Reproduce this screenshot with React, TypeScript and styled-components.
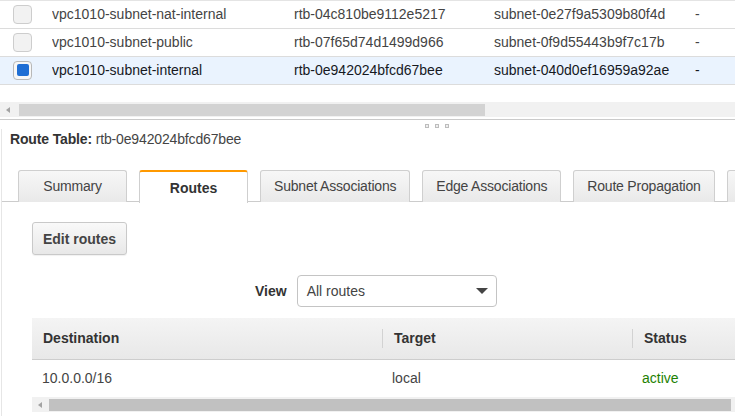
import React from "react";
import styled, { createGlobalStyle, css } from "styled-components";

const Global = createGlobalStyle`
  html, body { margin: 0; padding: 0; background: #fff; overflow: hidden; }
  body { font-family: "Liberation Sans", Arial, sans-serif; font-size: 14px; color: #444; }
  * { box-sizing: border-box; }
`;

const Page = styled.div`
  width: 735px;
  height: 416px;
  overflow: hidden;
`;

const TopTable = styled.div`
  border-top: 1px solid #e4e4e4;
`;

const Row = styled.div<{ $selected?: boolean }>`
  display: grid;
  grid-template-columns: 52px 242px 200px 201px 1fr;
  align-items: center;
  height: 28px;
  padding-bottom: 1px;
  border-bottom: 1px solid #dcdcdc;
  background: ${(p) => (p.$selected ? "#eaf3fe" : "#fff")};
  color: ${(p) => (p.$selected ? "#16191f" : "#444")};
  white-space: nowrap;
`;

const CheckCell = styled.div`
  padding-left: 13px;
  display: flex;
  align-items: center;
`;

const Check = styled.span<{ $checked?: boolean }>`
  width: 19px;
  height: 19px;
  border-radius: 4px;
  border: 1px solid ${(p) => (p.$checked ? "#b8b8b8" : "#cdcdcd")};
  background: ${(p) => (p.$checked ? "#f7f7f7" : "#f2f2f2")};
  display: flex;
  align-items: center;
  justify-content: center;
  ${(p) =>
    p.$checked &&
    css`
      &::after {
        content: "";
        width: 12px;
        height: 12px;
        border-radius: 2px;
        background: #1f6ed4;
      }
    `}
`;

const Cell = styled.div`
  overflow: hidden;
`;

const HScroll = styled.div`
  position: relative;
  height: 15px;
  background: #f1f1f1;
  display: flex;
  align-items: center;
  &::before {
    content: "";
    margin-left: 6px;
    border-style: solid;
    border-width: 3.5px 4px 3.5px 0;
    border-color: transparent #a3a3a3 transparent transparent;
  }
`;

const Thumb = styled.div<{ $color: string }>`
  position: absolute;
  top: 2px;
  bottom: 1px;
  background: ${(p) => p.$color};
`;

const TopScrollWrap = styled.div`
  margin-top: 17px;
`;

const Splitter = styled.div`
  margin-top: 2px;
  border-top: 1px solid #cacaca;
  height: 10px;
  display: flex;
  gap: 6px;
  padding-left: 425px;
  padding-top: 4px;
`;

const Grip = styled.span`
  width: 4px;
  height: 4px;
  border: 1px solid #bdbdbd;
  background: #efefef;
`;

const Panel = styled.div`
  border-left: 1px solid #e6e6e6;
  margin-left: 1px;
  height: 287px;
`;

const PanelTitle = styled.div`
  height: 20px;
  line-height: 20px;
  padding-left: 8px;
  font-size: 14px;
  color: #444;
  letter-spacing: -0.15px;
  b { color: #333; }
`;

const Tabs = styled.div`
  margin-top: 21px;
  display: flex;
  gap: 12px;
  padding-left: 16px;
  border-bottom: 1px solid #cccccc;
  height: 32px;
  white-space: nowrap;
`;

const Tab = styled.div<{ $active?: boolean }>`
  flex: none;
  height: 32px;
  min-width: 109px;
  padding: 0 13px 1px;
  display: flex;
  align-items: center;
  justify-content: center;
  border: 1px solid #cfcfcf;
  border-bottom: none;
  border-radius: 3px 3px 0 0;
  font-size: 14px;
  letter-spacing: -0.2px;
  color: #444;
  background: linear-gradient(#f7f7f7, #e9e9e9);
  ${(p) =>
    p.$active &&
    css`
      height: 33px;
      margin-bottom: -1px;
      background: #fff;
      border-top: 2px solid #f90;
      font-weight: bold;
      color: #333;
      padding-top: 1px;
      letter-spacing: 0;
    `}
`;

const TabBody = styled.div`
  padding-left: 30px;
`;

const EditButton = styled.button`
  margin-top: 20px;
  height: 33px;
  width: 95px;
  border: 1px solid #c9c9c9;
  border-radius: 3px;
  background: linear-gradient(#f9f9f9, #e8e8e8);
  font-family: "Liberation Sans", Arial, sans-serif;
  font-size: 14px;
  font-weight: bold;
  color: #444;
  padding: 0;
  box-shadow: 0 1px 1px rgba(0, 0, 0, 0.06);
`;

const ViewBar = styled.div`
  margin-top: 20px;
  display: flex;
  align-items: center;
  gap: 10px;
  padding-left: 223px;
`;

const ViewLabel = styled.span`
  font-weight: bold;
  color: #333;
`;

const Select = styled.div`
  width: 200px;
  height: 32px;
  border: 1px solid #c4c4c4;
  border-radius: 4px;
  display: flex;
  align-items: center;
  justify-content: space-between;
  padding: 0 8px 0 9px;
  color: #444;
  &::after {
    content: "";
    border-style: solid;
    border-width: 6px 6px 0 6px;
    border-color: #444 transparent transparent transparent;
  }
`;

const RoutesTable = styled.div`
  margin-top: 11px;
`;

const RGrid = styled.div`
  display: grid;
  grid-template-columns: 350px 250px 1fr;
`;

const HeadRow = styled(RGrid)`
  height: 42px;
  background: linear-gradient(#f4f4f4, #e8e8e8);
  border-bottom: 1px solid #cdcdcd;
  align-items: center;
`;

const HeadCell = styled.div<{ $sep?: boolean }>`
  font-weight: bold;
  color: #333;
  padding-left: 11px;
  height: 19px;
  line-height: 19px;
  border-left: ${(p) => (p.$sep ? "1px solid #d2d2d2" : "none")};
`;

const DataRow = styled(RGrid)`
  height: 36px;
  align-items: center;
`;

const DataCell = styled.div<{ $status?: boolean }>`
  padding-left: 10px;
  color: ${(p) => (p.$status ? "#1d8102" : "#444")};
`;

const BottomScrollWrap = styled.div`
  margin-top: 1px;
`;

const topRows = [
  { name: "vpc1010-subnet-nat-internal", rtb: "rtb-04c810be9112e5217", subnet: "subnet-0e27f9a5309b80f4d" },
  { name: "vpc1010-subnet-public", rtb: "rtb-07f65d74d1499d966", subnet: "subnet-0f9d55443b9f7c17b" },
  { name: "vpc1010-subnet-internal", rtb: "rtb-0e942024bfcd67bee", subnet: "subnet-040d0ef16959a92ae", selected: true },
];

const tabs = ["Summary", "Routes", "Subnet Associations", "Edge Associations", "Route Propagation", ""];

export default function App() {
  return (
    <Page>
      <Global />
      <TopTable>
        {topRows.map((r) => (
          <Row key={r.name} $selected={r.selected}>
            <CheckCell>
              <Check $checked={r.selected} />
            </CheckCell>
            <Cell>{r.name}</Cell>
            <Cell>{r.rtb}</Cell>
            <Cell>{r.subnet}</Cell>
            <Cell>-</Cell>
          </Row>
        ))}
      </TopTable>
      <TopScrollWrap>
        <HScroll>
          <Thumb $color="#d3d3d3" style={{ left: 19, width: 466 }} />
        </HScroll>
      </TopScrollWrap>
      <Splitter>
        <Grip />
        <Grip />
        <Grip />
      </Splitter>
      <Panel>
        <PanelTitle>
          <b>Route Table:</b> rtb-0e942024bfcd67bee
        </PanelTitle>
        <Tabs>
          {tabs.map((t, i) => (
            <Tab key={i} $active={t === "Routes"}>
              {t}
            </Tab>
          ))}
        </Tabs>
        <TabBody>
          <EditButton>Edit routes</EditButton>
          <ViewBar>
            <ViewLabel>View</ViewLabel>
            <Select>All routes</Select>
          </ViewBar>
          <RoutesTable>
            <HeadRow>
              <HeadCell>Destination</HeadCell>
              <HeadCell $sep>Target</HeadCell>
              <HeadCell $sep>Status</HeadCell>
            </HeadRow>
            <DataRow>
              <DataCell>10.0.0.0/16</DataCell>
              <DataCell>local</DataCell>
              <DataCell $status>active</DataCell>
            </DataRow>
          </RoutesTable>
          <BottomScrollWrap>
            <HScroll>
              <Thumb $color="#c1c1c1" style={{ left: 17, width: 682 }} />
            </HScroll>
          </BottomScrollWrap>
        </TabBody>
      </Panel>
    </Page>
  );
}
